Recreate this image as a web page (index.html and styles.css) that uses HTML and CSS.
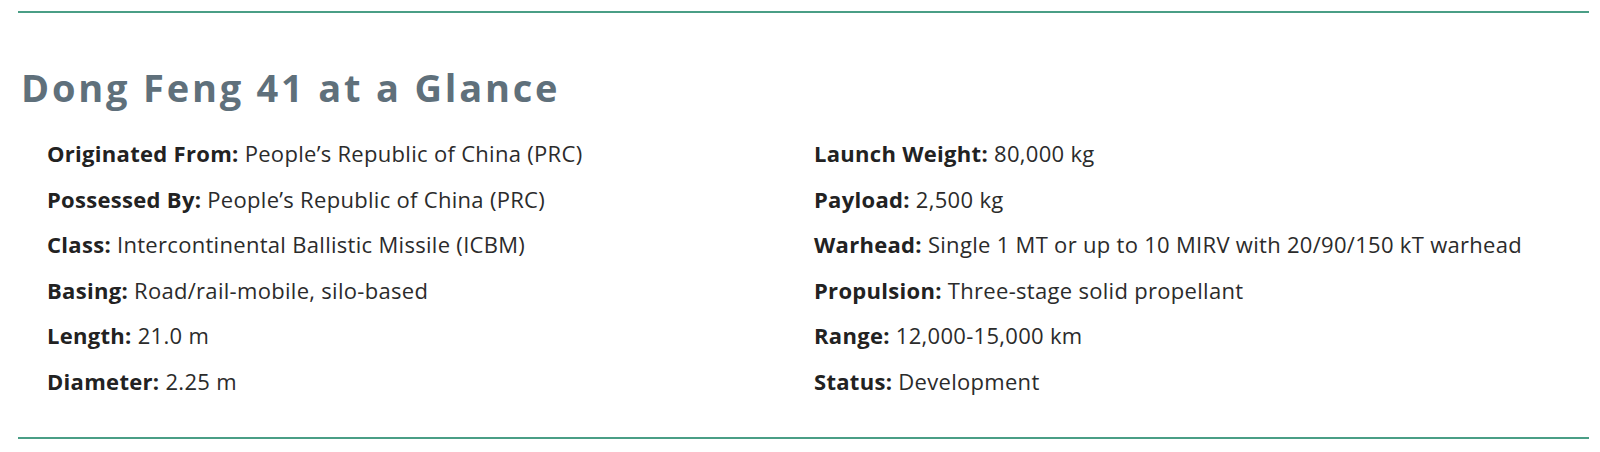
FILE: index.html
```html
<!DOCTYPE html>
<html lang="en">
<head>
<meta charset="utf-8">
<title>Dong Feng 41 at a Glance</title>
<link rel="stylesheet" href="styles.css">
</head>
<body>
<section class="glance">
  <h2 class="glance-title">Dong Feng 41 at a Glance</h2>
  <div class="glance-cols">
    <ul class="glance-list">
      <li><strong>Originated From:</strong> People’s Republic of China (PRC)</li>
      <li><strong>Possessed By:</strong> People’s Republic of China (PRC)</li>
      <li><strong>Class:</strong> Intercontinental Ballistic Missile (ICBM)</li>
      <li><strong>Basing:</strong> Road/rail-mobile, silo-based</li>
      <li><strong>Length:</strong> 21.0 m</li>
      <li><strong>Diameter:</strong> 2.25 m</li>
    </ul>
    <ul class="glance-list">
      <li><strong>Launch Weight:</strong> 80,000 kg</li>
      <li><strong>Payload:</strong> 2,500 kg</li>
      <li><strong>Warhead:</strong> Single 1 MT or up to 10 MIRV with 20/90/150 kT warhead</li>
      <li><strong>Propulsion:</strong> Three-stage solid propellant</li>
      <li><strong>Range:</strong> 12,000-15,000 km</li>
      <li><strong>Status:</strong> Development</li>
    </ul>
  </div>
</section>
</body>
</html>
```

FILE: styles.css
```css
html, body {
  margin: 0;
  padding: 0;
  background: #ffffff;
}

body {
  padding: 11px 11px 0 18px;
}

.glance {
  border-top: 2px solid #4a9e86;
  border-bottom: 2px solid #4a9e86;
  padding: 0 0 32px 0;
}

.glance-title {
  margin: 0;
  padding: 54px 0 0 3px;
  font-family: "Open Sans", sans-serif;
  font-weight: 700;
  font-size: 38px;
  line-height: 40px;
  letter-spacing: 2.8px;
  color: #5f707b;
}

.glance-cols {
  display: grid;
  grid-template-columns: 767px 1fr;
  padding: 24px 0 0 29px;
}

.glance-list {
  list-style: none;
  margin: 0;
  padding: 0;
  font-family: "Open Sans", sans-serif;
  font-size: 22px;
  line-height: 45.6px;
  letter-spacing: 0.3px;
  color: #2b2b2b;
}

.glance-list strong {
  font-weight: 700;
  color: #222;
}
```
